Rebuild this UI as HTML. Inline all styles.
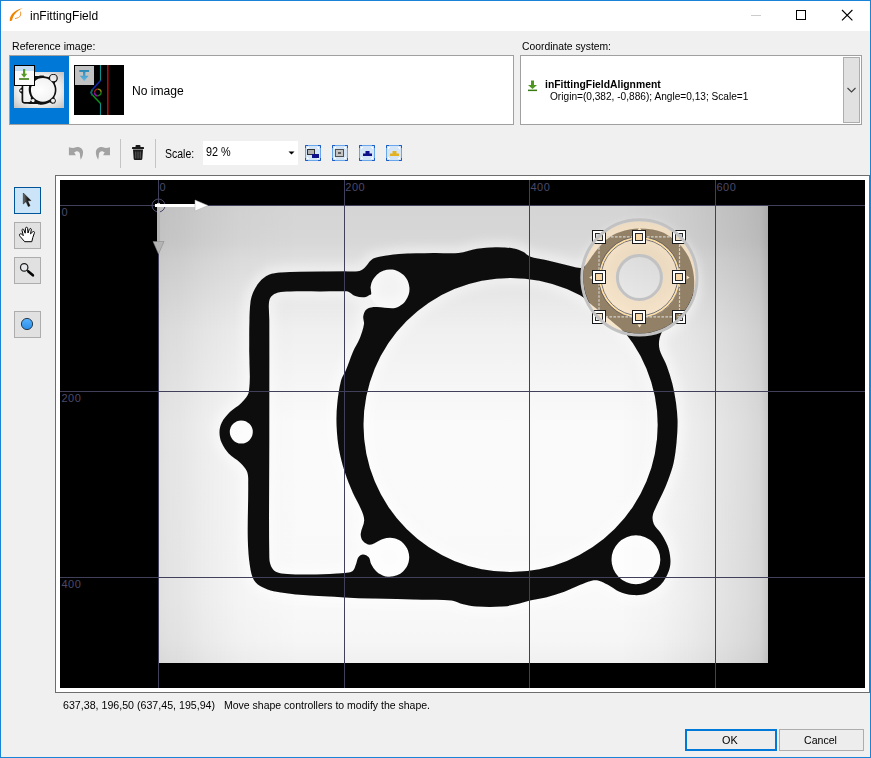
<!DOCTYPE html>
<html><head><meta charset="utf-8"><title>inFittingField</title>
<style>
html,body{margin:0;padding:0}
body{width:871px;height:758px;overflow:hidden;position:relative;background:#f0f0f0;font-family:"Liberation Sans",sans-serif;font-size:11px;color:#000}
.a{position:absolute}
.t{position:absolute;white-space:nowrap;line-height:14px}
#win{left:0;top:0;width:869px;height:756px;border:1px solid #1883d7}
#title{left:1px;top:1px;width:869px;height:30px;background:#fff}
.panel{background:#fff;border:1px solid #a0a0a0;box-sizing:border-box}
.tb{box-sizing:border-box;width:27px;height:27px;background:#e1e1e1;border:1px solid #adadad}
.btn{box-sizing:border-box;background:#ededed;border:1px solid #adadad;text-align:center;line-height:20px}
</style></head><body>
<div class="a" id="title"></div>
<!-- title icon -->
<svg class="a" style="left:8px;top:6px" width="18" height="18" viewBox="0 0 18 18">
<path d="M1.700 14.400C1.900 9.800 5.200 4.600 14.900 2.100C9.400 4.700 5.200 8.700 4.100 14.300C3.700 15.300 1.800 15.400 1.700 14.400Z" fill="#f08300"/>
<path d="M12.500 6C13.400 9 12.500 11.600 7.400 12.500" stroke="#f4942a" stroke-width="1" fill="none" stroke-linecap="round"/>
</svg>
<div class="t" style="left:30.40px;top:7.87px;font-size:12.5px;line-height:16px;color:#000;transform:scaleX(0.9608);transform-origin:0 0">inFittingField</div>
<!-- window controls -->
<svg class="a" style="left:740px;top:1px" width="130" height="30" viewBox="740 1 130 30" shape-rendering="crispEdges">
<rect x="751" y="15" width="10" height="1" fill="#cccccc"/>
<rect x="796.5" y="10.5" width="9" height="9" fill="none" stroke="#000" stroke-width="1"/>
<path d="M842 10L852.400 20.400M852.400 10L842 20.400" stroke="#000" stroke-width="1.100" fill="none" shape-rendering="auto"/>
</svg>

<div class="t" style="left:12.00px;top:37.92px;font-size:11.5px;line-height:16px;color:#000;transform:scaleX(0.9187);transform-origin:0 0">Reference image:</div>
<div class="t" style="left:522.30px;top:37.92px;font-size:11.5px;line-height:16px;color:#000;transform:scaleX(0.8983);transform-origin:0 0">Coordinate system:</div>

<!-- reference image list -->
<div class="a panel" style="left:9px;top:55px;width:505px;height:70px"></div>
<div class="a" style="left:10px;top:56px;width:59px;height:68px;background:#0078d7"></div>
<svg class="a" style="left:14px;top:65px" width="50" height="50" viewBox="0 0 50 50">
<defs><radialGradient id="tg" cx="0.5" cy="0.5" r="0.75"><stop offset="0" stop-color="#ffffff"/><stop offset="0.55" stop-color="#f0f0f0"/><stop offset="1" stop-color="#b8b8b8"/></radialGradient></defs>
<rect x="0" y="7" width="50" height="36" fill="url(#tg)"/>
<g transform="translate(-12.6,-9.6) scale(0.0812)" >
<path d="M248.9 391.5C250.9 377.8 249.1 363.8 249.2 350.0C249.3 340.7 249.1 331.3 249.4 322.0C249.6 315.3 249.6 308.6 250.5 302.0C250.9 298.6 251.9 295.2 253.3 292.0C255.0 288.3 257.0 284.7 259.7 281.7C262.3 278.9 265.4 276.4 268.9 274.8C272.5 273.2 276.5 272.9 280.4 272.5C286.9 271.9 293.5 271.9 300.0 271.8C314.9 271.5 329.8 271.4 344.7 271.3C349.0 271.3 353.4 272.0 357.6 271.3C360.1 270.9 362.5 269.5 364.4 267.9C367.1 265.6 368.5 262.1 371.3 259.9C373.3 258.4 375.8 257.6 378.2 257.1C385.0 255.7 391.9 254.6 398.9 254.1C410.3 253.2 421.8 253.2 433.3 253.0C441.7 252.8 450.2 253.8 458.6 253.0C464.9 252.4 470.8 249.8 477.0 248.8C483.0 247.8 489.2 247.3 495.3 247.2C501.5 247.1 507.7 247.4 513.8 248.4C517.0 248.9 520.1 250.3 523.0 251.8C525.5 253.0 527.3 255.5 529.9 256.4C535.0 258.2 540.6 258.7 545.9 259.9C552.0 261.3 558.1 263.0 564.3 264.4C569.7 265.6 574.9 267.4 580.4 267.9C581.9 268.0 583.4 267.3 584.5 266.3C586.9 264.0 588.6 260.9 590.6 258.2C592.2 256.1 593.6 253.8 595.2 251.7C597.0 249.5 598.9 247.3 600.8 245.2C602.6 243.3 604.3 241.4 606.3 239.7C608.4 238.0 610.6 236.3 613.0 235.0C615.3 233.7 617.7 232.7 620.2 231.9C623.2 230.9 626.3 230.1 629.4 229.5C632.6 228.9 635.8 228.4 639.1 228.4C643.6 228.4 648.1 228.8 652.5 229.5C655.6 230.0 658.7 230.7 661.7 231.9C664.3 232.9 666.7 234.5 669.1 236.0C671.5 237.6 673.8 239.4 676.0 241.3C678.1 243.1 680.2 245.0 682.0 247.1C683.7 249.1 685.2 251.3 686.6 253.6C688.0 255.9 689.4 258.3 690.3 260.9C691.5 264.2 692.5 267.6 693.1 271.1C693.8 274.7 694.2 278.3 694.2 282.0C694.2 286.4 694.0 290.8 693.1 295.1C692.4 298.3 690.8 301.3 689.4 304.3C688.3 306.6 687.1 308.7 685.7 310.8C684.1 313.1 682.3 315.4 680.5 317.5C678.6 319.7 676.7 321.7 674.6 323.7C672.9 325.3 671.1 327.0 669.1 328.3C666.8 329.9 663.0 330.0 661.7 332.5C659.4 337.0 658.4 342.6 659.2 347.6C660.2 354.1 664.5 359.7 666.8 365.9C669.0 371.9 670.9 378.1 672.5 384.3C674.0 390.4 675.1 396.5 676.0 402.7C676.8 408.8 677.5 414.9 677.6 421.0C677.7 427.9 677.2 434.8 676.6 441.7C675.9 448.6 675.2 455.6 673.7 462.4C672.3 468.6 670.1 474.7 667.9 480.7C666.3 485.2 664.2 489.6 662.2 494.0C660.3 498.3 658.0 502.4 656.1 506.7C654.8 509.7 653.1 512.7 652.7 515.9C652.3 518.6 652.7 521.5 653.8 524.0C655.4 527.5 658.7 529.9 660.7 533.1C663.3 537.2 665.9 541.3 667.6 545.8C669.2 550.2 670.2 554.9 670.4 559.6C670.6 563.4 670.2 567.4 668.8 571.0C666.9 576.0 664.4 581.0 660.7 584.8C656.9 588.7 652.1 591.6 647.0 593.5C642.7 595.1 637.8 595.4 633.2 595.1C628.5 594.8 623.8 593.5 619.4 591.7C615.3 590.0 611.8 586.9 607.9 584.8C604.9 583.2 602.0 581.5 598.7 580.7C596.5 580.1 594.0 580.2 591.8 580.7C587.9 581.6 584.1 583.3 580.4 584.8C575.0 587.0 569.8 589.7 564.3 591.7C558.3 593.9 552.1 595.8 545.9 597.4C540.6 598.7 535.2 599.2 529.9 600.4C525.2 601.5 520.7 603.2 516.0 604.3C511.4 605.3 506.9 606.3 502.2 606.6C493.8 607.1 485.4 607.1 477.0 606.6C472.3 606.3 467.7 605.4 463.2 604.3C459.3 603.3 455.7 600.8 451.7 600.4C441.8 599.3 431.8 599.9 421.8 599.7C405.3 599.3 388.7 599.1 372.2 598.6C363.0 598.3 353.9 597.9 344.7 597.4C330.9 596.7 317.1 596.3 303.3 595.1C293.3 594.2 283.3 593.1 273.5 591.2C269.5 590.4 265.5 589.1 262.0 587.1C258.9 585.4 255.8 583.2 254.0 580.2C251.6 576.1 250.7 571.1 250.0 566.4C248.6 557.3 248.0 548.1 247.8 538.9C247.4 520.4 248.4 501.8 248.2 483.3C248.2 479.4 248.5 475.4 247.1 471.8C245.7 468.3 242.9 465.4 240.2 462.7C236.7 459.2 232.1 457.1 228.7 453.5C225.9 450.5 223.5 446.9 221.8 443.1C220.3 439.8 219.5 436.0 219.5 432.4C219.5 429.0 220.3 425.5 221.8 422.5C223.8 418.6 226.8 415.2 229.9 412.1C233.3 408.7 238.0 406.6 241.3 403.0C244.4 399.6 248.2 396.0 248.9 391.5ZM269.3 440.0C269.3 400.0 269.4 360.0 269.3 320.0C269.3 314.5 268.5 309.0 268.9 303.5C269.1 301.1 269.6 298.5 271.2 296.6C272.9 294.5 275.5 293.2 278.1 292.5C281.9 291.5 286.0 291.6 290.0 291.5C300.0 291.2 310.0 291.4 320.0 291.4C328.2 291.4 336.5 291.2 344.7 291.3C345.9 291.3 347.3 291.2 348.4 291.7C350.9 292.8 352.7 295.2 355.3 296.1C358.2 297.1 361.3 297.5 364.4 297.3C366.3 297.2 367.8 295.8 369.5 295.0C370.1 294.7 371.1 294.7 371.2 294.0C371.5 291.7 370.4 289.3 370.6 286.9C370.9 284.5 371.6 282.2 372.7 280.1C373.8 277.9 375.3 276.0 377.1 274.4C378.9 272.8 381.0 271.6 383.2 270.7C385.4 269.9 387.9 269.5 390.3 269.5C392.6 269.5 395.1 270.0 397.3 270.9C399.5 271.8 401.6 273.1 403.3 274.8C405.1 276.4 406.5 278.4 407.6 280.5C408.6 282.7 409.2 285.1 409.4 287.4C409.6 289.8 409.4 292.3 408.7 294.6C408.0 296.8 406.9 299.0 405.4 300.9C404.0 302.8 402.1 304.5 400.1 305.7C398.0 306.9 395.8 308.1 393.4 308.2C387.6 308.5 381.8 306.8 376.0 307.0C372.8 307.1 369.3 307.3 366.7 309.2C364.6 310.7 363.8 313.6 363.3 316.1C362.8 318.7 364.4 321.5 364.0 324.1C363.3 328.8 361.7 333.4 359.9 337.9C358.0 342.7 355.0 347.0 353.0 351.7C350.4 357.7 348.5 364.0 346.0 370.0C344.6 373.4 342.1 376.4 341.2 380.0C339.2 387.5 338.1 395.3 337.3 403.0C336.5 410.6 336.3 418.3 336.6 425.9C336.9 433.6 337.6 441.3 338.9 448.9C340.3 456.7 342.3 464.3 344.7 471.8C346.9 478.9 349.8 485.7 352.7 492.5C355.1 498.0 358.4 503.1 360.7 508.6C362.3 512.4 364.2 516.2 364.2 520.3C364.2 525.0 361.0 529.3 360.7 534.0C360.6 536.5 361.4 539.1 363.0 541.0C364.7 543.0 367.3 544.7 369.9 544.7C373.2 544.7 376.0 542.1 379.0 540.8C380.4 540.2 381.6 539.3 383.0 538.9C385.5 538.2 388.0 537.6 390.5 537.7C393.0 537.8 395.5 538.4 397.8 539.5C400.1 540.5 402.2 542.0 403.9 543.9C405.6 545.7 407.0 547.9 407.9 550.2C408.8 552.6 409.3 555.2 409.2 557.7C409.1 560.2 408.6 562.7 407.6 565.0C406.6 567.3 405.1 569.5 403.3 571.2C401.5 573.0 399.3 574.4 396.9 575.3C394.6 576.2 392.1 576.7 389.5 576.7C387.0 576.7 384.5 576.2 382.2 575.2C379.9 574.2 377.7 572.8 375.9 571.0C373.9 569.0 372.4 566.6 371.1 564.1C370.0 562.0 370.3 559.1 368.8 557.3C367.4 555.7 365.1 554.5 363.0 554.5C361.2 554.5 359.4 555.8 358.4 557.3C357.0 559.2 357.0 561.9 356.1 564.1C355.1 566.5 354.7 569.4 352.7 571.0C350.5 572.7 347.4 572.6 344.7 572.9C334.8 573.8 324.8 574.3 314.8 574.5C305.6 574.7 296.4 574.7 287.3 574.0C283.4 573.7 279.3 573.4 275.8 571.7C273.7 570.7 272.2 568.5 271.2 566.4C269.9 563.6 269.3 560.4 269.3 557.3C268.7 518.2 269.3 479.1 269.3 440.0ZM363.5 425.0a147.1 147.1 0 1 0 294.2 0a147.1 147.1 0 1 0 -294.2 0ZM229.8 432.0a11.5 11.5 0 1 0 23.0 0a11.5 11.5 0 1 0 -23.0 0ZM611.5 559.7a24.4 24.4 0 1 0 48.8 0a24.4 24.4 0 1 0 -48.8 0ZM599.7 278.0a40.3 40.3 0 1 0 80.6 0a40.3 40.3 0 1 0 -80.6 0Z" fill="#101010" fill-rule="evenodd" transform="translate(-0,-0)"/>
</g>
</svg>
<svg class="a" style="left:14px;top:65px" width="22" height="22" viewBox="0 0 22 22">
<rect x="0.5" y="0.5" width="20" height="20" fill="#fbfbfb" stroke="#000"/>
<rect x="1" y="1" width="19" height="5" fill="#c4ddf3"/>
<path d="M9 4h2.200v4.700h2l-3.100 4.100l-3.100 -4.100h2z" fill="#559a24"/>
<rect x="5.100" y="13.200" width="9.900" height="1.600" fill="#3a7a10"/>
</svg>
<!-- second thumbnail -->
<svg class="a" style="left:74px;top:65px" width="50" height="50" viewBox="0 0 50 50">
<defs><linearGradient id="ba" x1="0" x2="0" y1="0" y2="1"><stop offset="0" stop-color="#2b86b4"/><stop offset="1" stop-color="#62b8e4"/></linearGradient></defs>
<rect width="50" height="50" fill="#000"/>
<rect x="1" y="1" width="19" height="19" fill="#c2c2c2"/>
<path d="M5.300 5h9.800v2h-3.700v3.800h3.200l-4.400 5.100l-4.400 -5.100h3.200v-3.800h-3.700z" fill="url(#ba)"/>
<path d="M26.500 0V16M26.500 38V50" stroke="#0e9090" stroke-width="1.100" fill="none"/>
<path d="M26.500 15.500L18.500 24.500" stroke="#1428a8" stroke-width="1.600" fill="none"/>
<path d="M18.500 24.500L17 27.500L18.500 30.500" stroke="#0c6868" stroke-width="1.800" fill="none"/>
<path d="M18.500 30L26.500 38.500" stroke="#0e8c1c" stroke-width="1.600" fill="none"/>
<path d="M20.500 27.500a3.300 3.300 0 0 1 3.300 -3.300" stroke="#b01818" stroke-width="1.300" fill="none"/>
<path d="M23.800 24.200a3.300 3.300 0 0 1 3.300 3.300" stroke="#909010" stroke-width="1.300" fill="none"/>
<path d="M27.100 27.500a3.300 3.300 0 0 1 -3.300 3.300" stroke="#108818" stroke-width="1.300" fill="none"/>
<path d="M23.800 30.800a3.300 3.300 0 0 1 -3.300 -3.300" stroke="#9010a0" stroke-width="1.600" fill="none"/>
<rect x="33" y="0" width="1.600" height="50" fill="#a80c0c"/>
</svg>
<div class="t" style="left:132.40px;top:83.07px;font-size:12.5px;line-height:16px;color:#000;transform:scaleX(0.9682);transform-origin:0 0">No image</div>

<!-- coordinate system -->
<div class="a panel" style="left:520px;top:55px;width:342px;height:70px"></div>
<div class="a" style="left:843px;top:57px;width:17px;height:66px;box-sizing:border-box;background:#e1e1e1;border:1px solid #adadad"></div>
<svg class="a" style="left:845px;top:85px" width="13" height="10" viewBox="0 0 13 10"><path d="M2.500 3L6.500 7L10.500 3" stroke="#404040" stroke-width="1.100" fill="none"/></svg>
<svg class="a" style="left:527px;top:79px" width="14" height="14" viewBox="527 79 14 14">
<path d="M531 80.500h3v4.500h3l-4.500 4l-4.500 -4h3z" fill="#4f9620"/>
<rect x="528" y="89.600" width="9" height="1.500" fill="#3a7a12"/>
</svg>
<div class="t" style="left:545.40px;top:76.53px;font-size:10px;line-height:16px;color:#000;transform:scaleX(1.0362);transform-origin:0 0;font-weight:bold">inFittingFieldAlignment</div>
<div class="t" style="left:550.30px;top:88.83px;font-size:10px;line-height:16px;color:#000;transform:scaleX(1.0124);transform-origin:0 0">Origin=(0,382, -0,886); Angle=0,13; Scale=1</div>

<!-- toolbar -->
<svg class="a" style="left:60px;top:138px" width="350" height="32" viewBox="60 138 350 32">
<g id="undo" fill="#a2a2a2"><path d="M68.9 147.3C70.3 147.5 71.7 148.0 73.1 148.0C74.5 148.0 75.8 147.0 77.2 147.1C78.6 147.2 80.1 147.4 81.2 148.3C82.2 149.1 82.8 150.4 83.0 151.6C83.2 153.1 82.8 154.7 82.4 156.2C82.0 157.4 81.3 158.5 80.7 159.7C80.5 158.5 80.3 157.4 80.1 156.2C79.9 155.1 80.2 153.9 79.6 152.9C79.1 152.1 78.2 151.4 77.2 151.3C76.2 151.2 75.2 152.0 74.2 152.3L75.8 155.3L68.9 155.3Z"/></g>
<use href="#undo" transform="translate(178.900 0) scale(-1 1)"/>
<rect x="120" y="139" width="1" height="29" fill="#c4c4c4"/>
<rect x="155" y="139" width="1" height="29" fill="#c4c4c4"/>
<g fill="#1a1a1a">
<rect x="132" y="147" width="12" height="2" rx="0.5"/>
<rect x="135.500" y="145" width="5" height="2.5" rx="1"/>
<path d="M133 149.600h10l-0.700 9.400a1.200 1.200 0 0 1 -1.200 1h-6.200a1.200 1.200 0 0 1 -1.200 -1z"/>
</g>
<g stroke="#777" stroke-width="0.800"><path d="M135.800 151.500v7M138 151.500v7M140.200 151.500v7"/></g>
</svg>
<div class="t" style="left:165.30px;top:145.67px;font-size:12.5px;line-height:16px;color:#000;transform:scaleX(0.8403);transform-origin:0 0">Scale:</div>
<div class="a" style="left:203px;top:141px;width:95px;height:24px;background:#fff"></div>
<div class="t" style="left:206.40px;top:143.97px;font-size:12.5px;line-height:16px;color:#000;transform:scaleX(0.8667);transform-origin:0 0">92 %</div>
<svg class="a" style="left:287px;top:150px" width="9" height="6" viewBox="0 0 9 6"><path d="M1.500 1.500h6l-3 3z" fill="#000"/></svg>
<!-- toolbar fit icons -->
<svg class="a" style="left:304px;top:144px" width="100" height="18" viewBox="304 144 100 18">
<g id="fi">
<rect x="305.500" y="145.500" width="15" height="15" fill="#d3e5f7" stroke="#6aa7ea" stroke-width="1"/>
<path d="M305.500 148v-2.500h2.500M318 145.500h2.500v2.500M320.500 158v2.500h-2.500M308 160.500h-2.500v-2.500" stroke="#1c5cc4" stroke-width="1" fill="none"/>
<path d="M307.500 149v-1.500h1.500M317 147.500h1.500v1.500M318.500 157v1.500h-1.500M309 158.500h-1.500v-1.500" stroke="#fff" stroke-width="1" fill="none"/>
</g>
<use href="#fi" x="27"/><use href="#fi" x="54"/><use href="#fi" x="81"/>
<rect x="307.500" y="149.500" width="7" height="5" fill="#b4b4b4" stroke="#303030"/>
<rect x="312" y="154" width="7" height="4" fill="#10108a"/>
<rect x="335.500" y="149.500" width="8" height="7" fill="#c4c4c4" stroke="#505050"/>
<rect x="338" y="152" width="3" height="2" fill="#606060"/>
<path d="M363 156h9v-2.500h-2.500v-2.500h-4v2.500h-2.500z" fill="#10108a"/>
<path d="M390 156h9v-2.500h-2.500v-2.500h-4v2.500h-2.500z" fill="#e3b222"/>
</svg>

<!-- left tools -->
<div class="a tb" style="left:14px;top:187px;background:#cce4f7;border-color:#005499"></div>
<div class="a tb" style="left:14px;top:222px"></div>
<div class="a tb" style="left:14px;top:257px"></div>
<div class="a tb" style="left:14px;top:311px"></div>
<svg class="a" style="left:14px;top:187px" width="27" height="151" viewBox="14 187 27 151"><defs><linearGradient id="cg" x1="0" x2="1" y1="0" y2="0"><stop offset="0" stop-color="#707070"/><stop offset="0.6" stop-color="#1a1a1a"/><stop offset="1" stop-color="#000"/></linearGradient><linearGradient id="bc" x1="0" x2="0" y1="0" y2="1"><stop offset="0" stop-color="#58b2ff"/><stop offset="1" stop-color="#2a8ee8"/></linearGradient></defs>
<path d="M23.300 193V204L26 201.500L28.300 206.600L30 205.800L27.700 200.800L30.900 200.600Z" fill="url(#cg)" stroke="#111" stroke-width="0.500"/>
<path d="M24.700 241.700L20.200 236.500C19 235 19.300 234 20.500 233.800C21.500 233.700 22.500 234.800 23.300 235.600L22 230.300C21.800 229 23.300 228.600 23.800 229.800L25.200 233.200L25.500 228.300C25.600 226.900 27.500 226.900 27.600 228.300L28 233L29.400 229.200C29.900 228 31.600 228.400 31.300 229.800L30.500 233.800L32.800 231.800C33.800 231 35 232 34.300 233.200C33 236 32.500 239 31.800 241.700Z" fill="#fff" stroke="#000" stroke-width="1" stroke-linejoin="round"/>
<circle cx="24.200" cy="267.400" r="3.700" fill="#e6e9ec" stroke="#1c1c1c" stroke-width="1.200"/>
<path d="M27 270.200l1.200 1" stroke="#1c1c1c" stroke-width="1.200"/><path d="M28.400 271.500l4.500 3.800" stroke="#050505" stroke-width="2.600" stroke-linecap="round"/>
<circle cx="27" cy="324" r="5.600" fill="url(#bc)" stroke="#1c2c3c" stroke-width="0.900"/>
</svg>

<!-- viewer -->
<div class="a" style="left:55px;top:175px;width:815px;height:518px;box-sizing:border-box;border:1px solid #6d6d6d;background:#fff"></div>
<svg class="a" style="left:60px;top:180px" width="805" height="508" viewBox="60 180 805 508">
<defs>
<clipPath id="imgclip"><rect x="158" y="205.5" width="610" height="457.5"/></clipPath>
<filter id="glow" x="-10%" y="-10%" width="120%" height="120%"><feGaussianBlur stdDeviation="4.500"/></filter>
<filter id="soft" x="-5%" y="-5%" width="110%" height="110%"><feGaussianBlur stdDeviation="0.550"/></filter>
<linearGradient id="bg" x1="0" x2="0" y1="0" y2="1"><stop offset="0.001" stop-color="#d5d5d5"/><stop offset="0.043" stop-color="#d6d6d6"/><stop offset="0.080" stop-color="#d8d8d8"/><stop offset="0.119" stop-color="#dfdfdf"/><stop offset="0.272" stop-color="#f0f0f0"/><stop offset="0.480" stop-color="#fafafa"/><stop offset="0.862" stop-color="#f9f9f9"/><stop offset="0.950" stop-color="#f6f6f6"/><stop offset="1.000" stop-color="#f0f0f0"/></linearGradient>
<linearGradient id="eL" x1="0" x2="1" y1="0" y2="0"><stop offset="0.000" stop-color="#000" stop-opacity="0.1"/><stop offset="0.085" stop-color="#000" stop-opacity="0.085"/><stop offset="0.155" stop-color="#000" stop-opacity="0.08"/><stop offset="0.331" stop-color="#000" stop-opacity="0.05"/><stop offset="0.577" stop-color="#000" stop-opacity="0.02"/><stop offset="1.000" stop-color="#000" stop-opacity="0"/></linearGradient>
<linearGradient id="eR" x1="1" x2="0" y1="0" y2="0"><stop offset="0.000" stop-color="#000" stop-opacity="0.2"/><stop offset="0.054" stop-color="#000" stop-opacity="0.14"/><stop offset="0.155" stop-color="#000" stop-opacity="0.115"/><stop offset="0.324" stop-color="#000" stop-opacity="0.085"/><stop offset="0.527" stop-color="#000" stop-opacity="0.05"/><stop offset="0.730" stop-color="#000" stop-opacity="0.02"/><stop offset="1.000" stop-color="#000" stop-opacity="0"/></linearGradient>
</defs>
<rect x="60" y="180" width="805" height="508" fill="#000"/>
<rect x="158" y="205.5" width="610" height="457.5" fill="url(#bg)"/>
<rect x="158" y="205.5" width="142" height="457.5" fill="url(#eL)"/>
<rect x="620" y="205.5" width="148" height="457.5" fill="url(#eR)"/>
<g clip-path="url(#imgclip)">
<path d="M248.9 391.5C250.9 377.8 249.1 363.8 249.2 350.0C249.3 340.7 249.1 331.3 249.4 322.0C249.6 315.3 249.6 308.6 250.5 302.0C250.9 298.6 251.9 295.2 253.3 292.0C255.0 288.3 257.0 284.7 259.7 281.7C262.3 278.9 265.4 276.4 268.9 274.8C272.5 273.2 276.5 272.9 280.4 272.5C286.9 271.9 293.5 271.9 300.0 271.8C314.9 271.5 329.8 271.4 344.7 271.3C349.0 271.3 353.4 272.0 357.6 271.3C360.1 270.9 362.5 269.5 364.4 267.9C367.1 265.6 368.5 262.1 371.3 259.9C373.3 258.4 375.8 257.6 378.2 257.1C385.0 255.7 391.9 254.6 398.9 254.1C410.3 253.2 421.8 253.2 433.3 253.0C441.7 252.8 450.2 253.8 458.6 253.0C464.9 252.4 470.8 249.8 477.0 248.8C483.0 247.8 489.2 247.3 495.3 247.2C501.5 247.1 507.7 247.4 513.8 248.4C517.0 248.9 520.1 250.3 523.0 251.8C525.5 253.0 527.3 255.5 529.9 256.4C535.0 258.2 540.6 258.7 545.9 259.9C552.0 261.3 558.1 263.0 564.3 264.4C569.7 265.6 574.9 267.4 580.4 267.9C581.9 268.0 583.4 267.3 584.5 266.3C586.9 264.0 588.6 260.9 590.6 258.2C592.2 256.1 593.6 253.8 595.2 251.7C597.0 249.5 598.9 247.3 600.8 245.2C602.6 243.3 604.3 241.4 606.3 239.7C608.4 238.0 610.6 236.3 613.0 235.0C615.3 233.7 617.7 232.7 620.2 231.9C623.2 230.9 626.3 230.1 629.4 229.5C632.6 228.9 635.8 228.4 639.1 228.4C643.6 228.4 648.1 228.8 652.5 229.5C655.6 230.0 658.7 230.7 661.7 231.9C664.3 232.9 666.7 234.5 669.1 236.0C671.5 237.6 673.8 239.4 676.0 241.3C678.1 243.1 680.2 245.0 682.0 247.1C683.7 249.1 685.2 251.3 686.6 253.6C688.0 255.9 689.4 258.3 690.3 260.9C691.5 264.2 692.5 267.6 693.1 271.1C693.8 274.7 694.2 278.3 694.2 282.0C694.2 286.4 694.0 290.8 693.1 295.1C692.4 298.3 690.8 301.3 689.4 304.3C688.3 306.6 687.1 308.7 685.7 310.8C684.1 313.1 682.3 315.4 680.5 317.5C678.6 319.7 676.7 321.7 674.6 323.7C672.9 325.3 671.1 327.0 669.1 328.3C666.8 329.9 663.0 330.0 661.7 332.5C659.4 337.0 658.4 342.6 659.2 347.6C660.2 354.1 664.5 359.7 666.8 365.9C669.0 371.9 670.9 378.1 672.5 384.3C674.0 390.4 675.1 396.5 676.0 402.7C676.8 408.8 677.5 414.9 677.6 421.0C677.7 427.9 677.2 434.8 676.6 441.7C675.9 448.6 675.2 455.6 673.7 462.4C672.3 468.6 670.1 474.7 667.9 480.7C666.3 485.2 664.2 489.6 662.2 494.0C660.3 498.3 658.0 502.4 656.1 506.7C654.8 509.7 653.1 512.7 652.7 515.9C652.3 518.6 652.7 521.5 653.8 524.0C655.4 527.5 658.7 529.9 660.7 533.1C663.3 537.2 665.9 541.3 667.6 545.8C669.2 550.2 670.2 554.9 670.4 559.6C670.6 563.4 670.2 567.4 668.8 571.0C666.9 576.0 664.4 581.0 660.7 584.8C656.9 588.7 652.1 591.6 647.0 593.5C642.7 595.1 637.8 595.4 633.2 595.1C628.5 594.8 623.8 593.5 619.4 591.7C615.3 590.0 611.8 586.9 607.9 584.8C604.9 583.2 602.0 581.5 598.7 580.7C596.5 580.1 594.0 580.2 591.8 580.7C587.9 581.6 584.1 583.3 580.4 584.8C575.0 587.0 569.8 589.7 564.3 591.7C558.3 593.9 552.1 595.8 545.9 597.4C540.6 598.7 535.2 599.2 529.9 600.4C525.2 601.5 520.7 603.2 516.0 604.3C511.4 605.3 506.9 606.3 502.2 606.6C493.8 607.1 485.4 607.1 477.0 606.6C472.3 606.3 467.7 605.4 463.2 604.3C459.3 603.3 455.7 600.8 451.7 600.4C441.8 599.3 431.8 599.9 421.8 599.7C405.3 599.3 388.7 599.1 372.2 598.6C363.0 598.3 353.9 597.9 344.7 597.4C330.9 596.7 317.1 596.3 303.3 595.1C293.3 594.2 283.3 593.1 273.5 591.2C269.5 590.4 265.5 589.1 262.0 587.1C258.9 585.4 255.8 583.2 254.0 580.2C251.6 576.1 250.7 571.1 250.0 566.4C248.6 557.3 248.0 548.1 247.8 538.9C247.4 520.4 248.4 501.8 248.2 483.3C248.2 479.4 248.5 475.4 247.1 471.8C245.7 468.3 242.9 465.4 240.2 462.7C236.7 459.2 232.1 457.1 228.7 453.5C225.9 450.5 223.5 446.9 221.8 443.1C220.3 439.8 219.5 436.0 219.5 432.4C219.5 429.0 220.3 425.5 221.8 422.5C223.8 418.6 226.8 415.2 229.9 412.1C233.3 408.7 238.0 406.6 241.3 403.0C244.4 399.6 248.2 396.0 248.9 391.5ZM269.3 440.0C269.3 400.0 269.4 360.0 269.3 320.0C269.3 314.5 268.5 309.0 268.9 303.5C269.1 301.1 269.6 298.5 271.2 296.6C272.9 294.5 275.5 293.2 278.1 292.5C281.9 291.5 286.0 291.6 290.0 291.5C300.0 291.2 310.0 291.4 320.0 291.4C328.2 291.4 336.5 291.2 344.7 291.3C345.9 291.3 347.3 291.2 348.4 291.7C350.9 292.8 352.7 295.2 355.3 296.1C358.2 297.1 361.3 297.5 364.4 297.3C366.3 297.2 367.8 295.8 369.5 295.0C370.1 294.7 371.1 294.7 371.2 294.0C371.5 291.7 370.4 289.3 370.6 286.9C370.9 284.5 371.6 282.2 372.7 280.1C373.8 277.9 375.3 276.0 377.1 274.4C378.9 272.8 381.0 271.6 383.2 270.7C385.4 269.9 387.9 269.5 390.3 269.5C392.6 269.5 395.1 270.0 397.3 270.9C399.5 271.8 401.6 273.1 403.3 274.8C405.1 276.4 406.5 278.4 407.6 280.5C408.6 282.7 409.2 285.1 409.4 287.4C409.6 289.8 409.4 292.3 408.7 294.6C408.0 296.8 406.9 299.0 405.4 300.9C404.0 302.8 402.1 304.5 400.1 305.7C398.0 306.9 395.8 308.1 393.4 308.2C387.6 308.5 381.8 306.8 376.0 307.0C372.8 307.1 369.3 307.3 366.7 309.2C364.6 310.7 363.8 313.6 363.3 316.1C362.8 318.7 364.4 321.5 364.0 324.1C363.3 328.8 361.7 333.4 359.9 337.9C358.0 342.7 355.0 347.0 353.0 351.7C350.4 357.7 348.5 364.0 346.0 370.0C344.6 373.4 342.1 376.4 341.2 380.0C339.2 387.5 338.1 395.3 337.3 403.0C336.5 410.6 336.3 418.3 336.6 425.9C336.9 433.6 337.6 441.3 338.9 448.9C340.3 456.7 342.3 464.3 344.7 471.8C346.9 478.9 349.8 485.7 352.7 492.5C355.1 498.0 358.4 503.1 360.7 508.6C362.3 512.4 364.2 516.2 364.2 520.3C364.2 525.0 361.0 529.3 360.7 534.0C360.6 536.5 361.4 539.1 363.0 541.0C364.7 543.0 367.3 544.7 369.9 544.7C373.2 544.7 376.0 542.1 379.0 540.8C380.4 540.2 381.6 539.3 383.0 538.9C385.5 538.2 388.0 537.6 390.5 537.7C393.0 537.8 395.5 538.4 397.8 539.5C400.1 540.5 402.2 542.0 403.9 543.9C405.6 545.7 407.0 547.9 407.9 550.2C408.8 552.6 409.3 555.2 409.2 557.7C409.1 560.2 408.6 562.7 407.6 565.0C406.6 567.3 405.1 569.5 403.3 571.2C401.5 573.0 399.3 574.4 396.9 575.3C394.6 576.2 392.1 576.7 389.5 576.7C387.0 576.7 384.5 576.2 382.2 575.2C379.9 574.2 377.7 572.8 375.9 571.0C373.9 569.0 372.4 566.6 371.1 564.1C370.0 562.0 370.3 559.1 368.8 557.3C367.4 555.7 365.1 554.5 363.0 554.5C361.2 554.5 359.4 555.8 358.4 557.3C357.0 559.2 357.0 561.9 356.1 564.1C355.1 566.5 354.7 569.4 352.7 571.0C350.5 572.7 347.4 572.6 344.7 572.9C334.8 573.8 324.8 574.3 314.8 574.5C305.6 574.7 296.4 574.7 287.3 574.0C283.4 573.7 279.3 573.4 275.8 571.7C273.7 570.7 272.2 568.5 271.2 566.4C269.9 563.6 269.3 560.4 269.3 557.3C268.7 518.2 269.3 479.1 269.3 440.0ZM363.5 425.0a147.1 147.1 0 1 0 294.2 0a147.1 147.1 0 1 0 -294.2 0ZM229.8 432.0a11.5 11.5 0 1 0 23.0 0a11.5 11.5 0 1 0 -23.0 0ZM611.5 559.7a24.4 24.4 0 1 0 48.8 0a24.4 24.4 0 1 0 -48.8 0ZM599.7 278.0a40.3 40.3 0 1 0 80.6 0a40.3 40.3 0 1 0 -80.6 0Z" fill="none" stroke="#fff" stroke-width="14" stroke-opacity="0.400" filter="url(#glow)"/>
<g fill="#fff" fill-opacity="0.500" filter="url(#soft)"><circle cx="241.300" cy="432" r="13"/><circle cx="390" cy="289" r="21"/><circle cx="389.700" cy="557.200" r="21"/><circle cx="635.900" cy="559.700" r="26"/></g>
<g filter="url(#soft)"><path d="M248.9 391.5C250.9 377.8 249.1 363.8 249.2 350.0C249.3 340.7 249.1 331.3 249.4 322.0C249.6 315.3 249.6 308.6 250.5 302.0C250.9 298.6 251.9 295.2 253.3 292.0C255.0 288.3 257.0 284.7 259.7 281.7C262.3 278.9 265.4 276.4 268.9 274.8C272.5 273.2 276.5 272.9 280.4 272.5C286.9 271.9 293.5 271.9 300.0 271.8C314.9 271.5 329.8 271.4 344.7 271.3C349.0 271.3 353.4 272.0 357.6 271.3C360.1 270.9 362.5 269.5 364.4 267.9C367.1 265.6 368.5 262.1 371.3 259.9C373.3 258.4 375.8 257.6 378.2 257.1C385.0 255.7 391.9 254.6 398.9 254.1C410.3 253.2 421.8 253.2 433.3 253.0C441.7 252.8 450.2 253.8 458.6 253.0C464.9 252.4 470.8 249.8 477.0 248.8C483.0 247.8 489.2 247.3 495.3 247.2C501.5 247.1 507.7 247.4 513.8 248.4C517.0 248.9 520.1 250.3 523.0 251.8C525.5 253.0 527.3 255.5 529.9 256.4C535.0 258.2 540.6 258.7 545.9 259.9C552.0 261.3 558.1 263.0 564.3 264.4C569.7 265.6 574.9 267.4 580.4 267.9C581.9 268.0 583.4 267.3 584.5 266.3C586.9 264.0 588.6 260.9 590.6 258.2C592.2 256.1 593.6 253.8 595.2 251.7C597.0 249.5 598.9 247.3 600.8 245.2C602.6 243.3 604.3 241.4 606.3 239.7C608.4 238.0 610.6 236.3 613.0 235.0C615.3 233.7 617.7 232.7 620.2 231.9C623.2 230.9 626.3 230.1 629.4 229.5C632.6 228.9 635.8 228.4 639.1 228.4C643.6 228.4 648.1 228.8 652.5 229.5C655.6 230.0 658.7 230.7 661.7 231.9C664.3 232.9 666.7 234.5 669.1 236.0C671.5 237.6 673.8 239.4 676.0 241.3C678.1 243.1 680.2 245.0 682.0 247.1C683.7 249.1 685.2 251.3 686.6 253.6C688.0 255.9 689.4 258.3 690.3 260.9C691.5 264.2 692.5 267.6 693.1 271.1C693.8 274.7 694.2 278.3 694.2 282.0C694.2 286.4 694.0 290.8 693.1 295.1C692.4 298.3 690.8 301.3 689.4 304.3C688.3 306.6 687.1 308.7 685.7 310.8C684.1 313.1 682.3 315.4 680.5 317.5C678.6 319.7 676.7 321.7 674.6 323.7C672.9 325.3 671.1 327.0 669.1 328.3C666.8 329.9 663.0 330.0 661.7 332.5C659.4 337.0 658.4 342.6 659.2 347.6C660.2 354.1 664.5 359.7 666.8 365.9C669.0 371.9 670.9 378.1 672.5 384.3C674.0 390.4 675.1 396.5 676.0 402.7C676.8 408.8 677.5 414.9 677.6 421.0C677.7 427.9 677.2 434.8 676.6 441.7C675.9 448.6 675.2 455.6 673.7 462.4C672.3 468.6 670.1 474.7 667.9 480.7C666.3 485.2 664.2 489.6 662.2 494.0C660.3 498.3 658.0 502.4 656.1 506.7C654.8 509.7 653.1 512.7 652.7 515.9C652.3 518.6 652.7 521.5 653.8 524.0C655.4 527.5 658.7 529.9 660.7 533.1C663.3 537.2 665.9 541.3 667.6 545.8C669.2 550.2 670.2 554.9 670.4 559.6C670.6 563.4 670.2 567.4 668.8 571.0C666.9 576.0 664.4 581.0 660.7 584.8C656.9 588.7 652.1 591.6 647.0 593.5C642.7 595.1 637.8 595.4 633.2 595.1C628.5 594.8 623.8 593.5 619.4 591.7C615.3 590.0 611.8 586.9 607.9 584.8C604.9 583.2 602.0 581.5 598.7 580.7C596.5 580.1 594.0 580.2 591.8 580.7C587.9 581.6 584.1 583.3 580.4 584.8C575.0 587.0 569.8 589.7 564.3 591.7C558.3 593.9 552.1 595.8 545.9 597.4C540.6 598.7 535.2 599.2 529.9 600.4C525.2 601.5 520.7 603.2 516.0 604.3C511.4 605.3 506.9 606.3 502.2 606.6C493.8 607.1 485.4 607.1 477.0 606.6C472.3 606.3 467.7 605.4 463.2 604.3C459.3 603.3 455.7 600.8 451.7 600.4C441.8 599.3 431.8 599.9 421.8 599.7C405.3 599.3 388.7 599.1 372.2 598.6C363.0 598.3 353.9 597.9 344.7 597.4C330.9 596.7 317.1 596.3 303.3 595.1C293.3 594.2 283.3 593.1 273.5 591.2C269.5 590.4 265.5 589.1 262.0 587.1C258.9 585.4 255.8 583.2 254.0 580.2C251.6 576.1 250.7 571.1 250.0 566.4C248.6 557.3 248.0 548.1 247.8 538.9C247.4 520.4 248.4 501.8 248.2 483.3C248.2 479.4 248.5 475.4 247.1 471.8C245.7 468.3 242.9 465.4 240.2 462.7C236.7 459.2 232.1 457.1 228.7 453.5C225.9 450.5 223.5 446.9 221.8 443.1C220.3 439.8 219.5 436.0 219.5 432.4C219.5 429.0 220.3 425.5 221.8 422.5C223.8 418.6 226.8 415.2 229.9 412.1C233.3 408.7 238.0 406.6 241.3 403.0C244.4 399.6 248.2 396.0 248.9 391.5ZM269.3 440.0C269.3 400.0 269.4 360.0 269.3 320.0C269.3 314.5 268.5 309.0 268.9 303.5C269.1 301.1 269.6 298.5 271.2 296.6C272.9 294.5 275.5 293.2 278.1 292.5C281.9 291.5 286.0 291.6 290.0 291.5C300.0 291.2 310.0 291.4 320.0 291.4C328.2 291.4 336.5 291.2 344.7 291.3C345.9 291.3 347.3 291.2 348.4 291.7C350.9 292.8 352.7 295.2 355.3 296.1C358.2 297.1 361.3 297.5 364.4 297.3C366.3 297.2 367.8 295.8 369.5 295.0C370.1 294.7 371.1 294.7 371.2 294.0C371.5 291.7 370.4 289.3 370.6 286.9C370.9 284.5 371.6 282.2 372.7 280.1C373.8 277.9 375.3 276.0 377.1 274.4C378.9 272.8 381.0 271.6 383.2 270.7C385.4 269.9 387.9 269.5 390.3 269.5C392.6 269.5 395.1 270.0 397.3 270.9C399.5 271.8 401.6 273.1 403.3 274.8C405.1 276.4 406.5 278.4 407.6 280.5C408.6 282.7 409.2 285.1 409.4 287.4C409.6 289.8 409.4 292.3 408.7 294.6C408.0 296.8 406.9 299.0 405.4 300.9C404.0 302.8 402.1 304.5 400.1 305.7C398.0 306.9 395.8 308.1 393.4 308.2C387.6 308.5 381.8 306.8 376.0 307.0C372.8 307.1 369.3 307.3 366.7 309.2C364.6 310.7 363.8 313.6 363.3 316.1C362.8 318.7 364.4 321.5 364.0 324.1C363.3 328.8 361.7 333.4 359.9 337.9C358.0 342.7 355.0 347.0 353.0 351.7C350.4 357.7 348.5 364.0 346.0 370.0C344.6 373.4 342.1 376.4 341.2 380.0C339.2 387.5 338.1 395.3 337.3 403.0C336.5 410.6 336.3 418.3 336.6 425.9C336.9 433.6 337.6 441.3 338.9 448.9C340.3 456.7 342.3 464.3 344.7 471.8C346.9 478.9 349.8 485.7 352.7 492.5C355.1 498.0 358.4 503.1 360.7 508.6C362.3 512.4 364.2 516.2 364.2 520.3C364.2 525.0 361.0 529.3 360.7 534.0C360.6 536.5 361.4 539.1 363.0 541.0C364.7 543.0 367.3 544.7 369.9 544.7C373.2 544.7 376.0 542.1 379.0 540.8C380.4 540.2 381.6 539.3 383.0 538.9C385.5 538.2 388.0 537.6 390.5 537.7C393.0 537.8 395.5 538.4 397.8 539.5C400.1 540.5 402.2 542.0 403.9 543.9C405.6 545.7 407.0 547.9 407.9 550.2C408.8 552.6 409.3 555.2 409.2 557.7C409.1 560.2 408.6 562.7 407.6 565.0C406.6 567.3 405.1 569.5 403.3 571.2C401.5 573.0 399.3 574.4 396.9 575.3C394.6 576.2 392.1 576.7 389.5 576.7C387.0 576.7 384.5 576.2 382.2 575.2C379.9 574.2 377.7 572.8 375.9 571.0C373.9 569.0 372.4 566.6 371.1 564.1C370.0 562.0 370.3 559.1 368.8 557.3C367.4 555.7 365.1 554.5 363.0 554.5C361.2 554.5 359.4 555.8 358.4 557.3C357.0 559.2 357.0 561.9 356.1 564.1C355.1 566.5 354.7 569.4 352.7 571.0C350.5 572.7 347.4 572.6 344.7 572.9C334.8 573.8 324.8 574.3 314.8 574.5C305.6 574.7 296.4 574.7 287.3 574.0C283.4 573.7 279.3 573.4 275.8 571.7C273.7 570.7 272.2 568.5 271.2 566.4C269.9 563.6 269.3 560.4 269.3 557.3C268.7 518.2 269.3 479.1 269.3 440.0ZM363.5 425.0a147.1 147.1 0 1 0 294.2 0a147.1 147.1 0 1 0 -294.2 0ZM229.8 432.0a11.5 11.5 0 1 0 23.0 0a11.5 11.5 0 1 0 -23.0 0ZM611.5 559.7a24.4 24.4 0 1 0 48.8 0a24.4 24.4 0 1 0 -48.8 0ZM599.7 278.0a40.3 40.3 0 1 0 80.6 0a40.3 40.3 0 1 0 -80.6 0Z" fill="#0d0d0d" fill-rule="evenodd"/>
<path d="M578 292L588.8 302.5L594.3 307.1L601 312.3L609.1 319.1L614.6 323.7L620.2 328.3L622.9 331.1L628.6 336.8L634 340L640 330L600 296Z" fill="#0d0d0d"/></g>
</g>
<!-- grid -->
<g stroke="#40405a" stroke-width="1" shape-rendering="crispEdges">
<path d="M158.5 180V688M344.5 180V688M529.5 180V688M715.5 180V688M60 205.5H865M60 391.5H865M60 577.5H865"/>
</g>
<g font-family="Liberation Sans, sans-serif" font-size="11" fill="#4b4a6a" letter-spacing="0.500">
<text x="159.500" y="190.800">0</text><text x="345.300" y="190.800">200</text><text x="530.500" y="190.800">400</text><text x="716.500" y="190.800">600</text>
<text x="61.500" y="216">0</text><text x="61.500" y="402">200</text><text x="61.500" y="588">400</text>
</g>
<!-- origin -->
<circle cx="158.500" cy="205.500" r="6.500" fill="none" stroke="#4b4a6a" stroke-width="1"/>
<path d="M158.500 203v40" stroke="#b4b4b4" stroke-width="3"/>
<path d="M153 241.500h11l-5.500 12.500z" fill="#b4b4b4" stroke="#808080" stroke-width="0.500"/>
<path d="M155 205.500h42" stroke="#fff" stroke-width="3"/>
<path d="M195 200l13 5.500l-13 5.500z" fill="#fff" stroke="#aaa" stroke-width="0.500"/>
<!-- fitting field annotation -->
<path d="M639.4 221.3a56.100 56.100 0 1 0 0.010 0zM639.4 253.900a23.500 23.500 0 1 1 -0.010 0z" fill="#f8d9ac" fill-opacity="0.570" fill-rule="evenodd"/>
<circle cx="639.4" cy="277.4" r="38.300" fill="none" stroke="#55555f" stroke-width="0.800"/>
<circle cx="639.4" cy="277.4" r="39.600" fill="none" stroke="#ffdf9e" stroke-width="1.400"/>
<circle cx="639.4" cy="277.4" r="40.800" fill="none" stroke="#55555f" stroke-width="0.700"/>
<rect x="599" y="236.800" width="80.500" height="80" fill="none" stroke="#d4d2cc" stroke-width="1.200" stroke-dasharray="2.600 1.400"/>
<g fill="#f6e2bf">
<path d="M639.500 227.200l2 3h-4z"/><path d="M639.500 327.600l2 -3h-4z"/><path d="M589.200 277.500l3 -2v4z"/><path d="M689.600 277.500l-3 -2v4z"/>
</g>
<g id="hc" fill="none"><rect x="592.500" y="230.500" width="13" height="13" stroke="#1a1a1a"/><rect x="594" y="232" width="10" height="10" stroke="#fff" stroke-width="2"/><rect x="595.500" y="233.500" width="7" height="7" stroke="#2a2a2a"/></g>
<use href="#hc" x="80"/><use href="#hc" y="80"/><use href="#hc" x="80" y="80"/>
<circle cx="639.4" cy="277.4" r="57.600" fill="none" stroke="#c2c2c2" stroke-width="3"/>
<circle cx="639.4" cy="277.4" r="22" fill="none" stroke="#c2c2c2" stroke-width="3"/>
<g id="hm"><rect x="632.500" y="230.500" width="13" height="13" fill="#fff" stroke="#1a1a1a"/><rect x="635.500" y="233.500" width="7" height="7" fill="#f7d7a6" stroke="#2a2a2a"/></g>
<use href="#hm" y="80"/><use href="#hm" x="-40" y="40"/><use href="#hm" x="40" y="40"/>
</svg>

<div class="t" style="left:63.30px;top:696.82px;font-size:11.5px;line-height:16px;color:#000;transform:scaleX(0.9255);transform-origin:0 0">637,38, 196,50 (637,45, 195,94)</div><div class="t" style="left:223.70px;top:696.82px;font-size:11.5px;line-height:16px;color:#000;transform:scaleX(0.9129);transform-origin:0 0">Move shape controllers to modify the shape.</div>

<div class="a btn" style="left:685px;top:729px;width:92px;height:22px;border:2px solid #0078d7"></div><div class="t" style="left:722.30px;top:731.62px;font-size:11.5px;line-height:16px;color:#000;transform:scaleX(0.9444);transform-origin:0 0">OK</div>
<div class="a btn" style="left:779px;top:729px;width:85px;height:22px"></div><div class="t" style="left:803.70px;top:731.62px;font-size:11.5px;line-height:16px;color:#000;transform:scaleX(0.9187);transform-origin:0 0">Cancel</div>
<div class="a" id="win" style="pointer-events:none"></div>
</body></html>
